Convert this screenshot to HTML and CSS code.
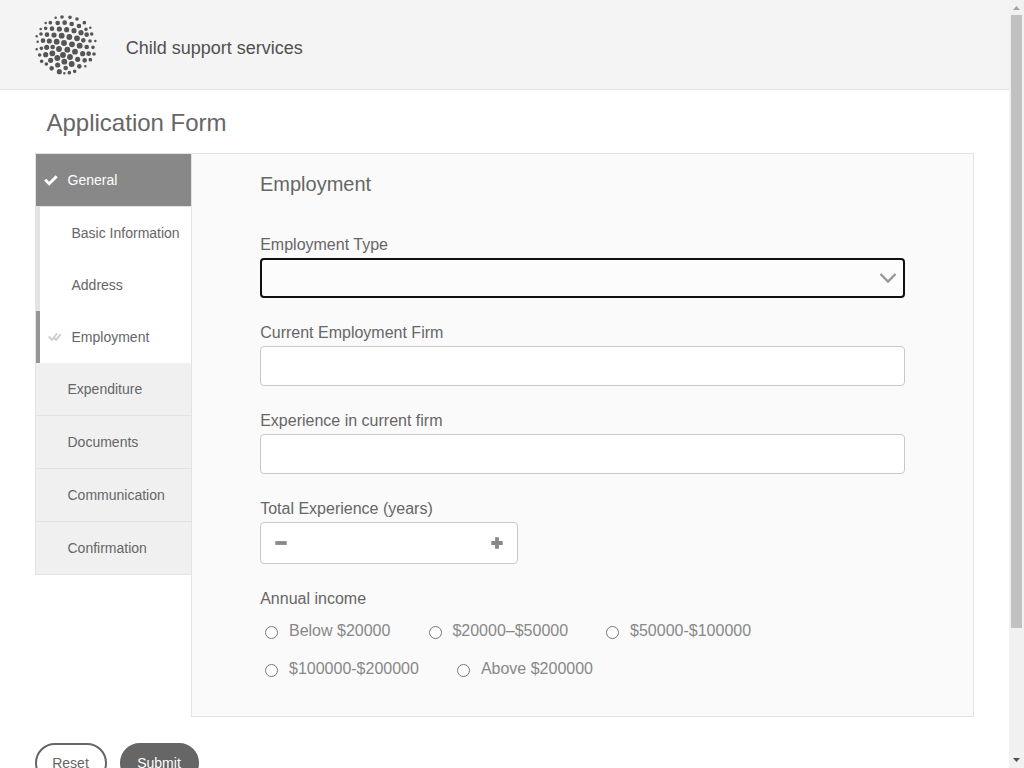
FILE: index.html
```html
<!DOCTYPE html>
<html lang="en">
<head>
<meta charset="utf-8">
<title>Child support services</title>
<link rel="stylesheet" href="styles.css">
</head>
<body>
<div class="viewport">
  <div class="page">
    <header class="header">
      <svg class="logo" viewBox="0 0 216 210" fill="none" stroke="#555" stroke-linecap="round">
        <path stroke-width="7.500" d="M77 23h.01M47 39h.01M32 57h.01M181 53h.01M20 79h.01M23 95h.01M196 93h.01M20 118h.01M103 190h.01M166 169h.01"/>
        <path stroke-width="11" d="M96 21h.01M120 22h.01M141 27h.01M163 38h.01M61 38h.01M47 55h.01M168 58h.01M33 72h.01M185 72h.01M180 93h.01M189 112h.01M34 115h.01M29 135h.01M192 132h.01M35 154h.01M49 162h.01M181 149h.01M118 188h.01M134 184h.01"/>
        <path stroke-width="14" d="M83 39h.01M104 38h.01M125 42h.01M147 48h.01M66 56h.01M51 74h.01M170 74h.01M39 92h.01M68 111h.01M160 91h.01M170 111h.01M176 131h.01M164 151h.01M148 169h.01M65 175h.01M107 174h.01"/>
        <path stroke-width="15.500" d="M88 57h.01M110 59h.01M132 62h.01M153 68h.01M72 75h.01M58 93h.01M50 112h.01M158 131h.01M47 134h.01M62 151h.01M83 165h.01M88 185h.01M143 148h.01"/>
        <path stroke-width="17.500" d="M95 77h.01M118 81h.01M141 85h.01M80 95h.01M102 99h.01M126 103h.01M149 107h.01M67 130h.01M87 117h.01M112 119h.01M135 125h.01M99 135h.01M120 141h.01M82 144h.01M103 155h.01M125 162h.01"/>
      </svg>
      <div class="brand">Child support services</div>
    </header>
    <h1 class="title">Application Form</h1>
    <main class="form">
      <nav class="nav">
        <div class="tab tab-active"><svg class="check" viewBox="0 0 14 12"><path d="M1.200 5.800l4 3.900 7.500-7.400" fill="none" stroke="#fff" stroke-width="3"/></svg>General</div>
        <div class="steps">
          <div class="step">Basic Information</div>
          <div class="step">Address</div>
          <div class="step step-current"><svg class="double-check" viewBox="0 0 14 10"><path d="M.8 4.500l3.300 3.300L9 1.500M6.200 6.300L8 7.800 12.700 2.300" fill="none" stroke="#ccc" stroke-width="1.900"/></svg>Employment</div>
        </div>
        <div class="tab">Expenditure</div>
        <div class="tab">Documents</div>
        <div class="tab">Communication</div>
        <div class="tab">Confirmation</div>
      </nav>
      <section class="panel">
        <h2 class="heading">Employment</h2>
        <label class="label">Employment Type</label>
        <div class="field select"><svg width="18" height="12" viewBox="0 0 18 12"><path d="M1.500 2l7.500 7.500L16.500 2" fill="none" stroke="#969696" stroke-width="2.300"/></svg></div>
        <label class="label">Current Employment Firm</label>
        <div class="field"></div>
        <label class="label">Experience in current firm</label>
        <div class="field"></div>
        <label class="label">Total Experience (years)</label>
        <div class="field stepper">
          <svg width="12" height="12"><path d="M0.300 6h11.400" stroke="#888" stroke-width="3.800"/></svg>
          <svg width="12" height="12"><path d="M0.300 6h11.400M6 .3v11.400" stroke="#888" stroke-width="3.800"/></svg>
        </div>
        <div class="label">Annual income</div>
        <div class="radios">
          <label class="radio"><input type="radio" name="income">Below $20000</label>
          <label class="radio"><input type="radio" name="income">$20000–$50000</label>
          <label class="radio"><input type="radio" name="income">$50000-$100000</label>
          <label class="radio"><input type="radio" name="income">$100000-$200000</label>
          <label class="radio"><input type="radio" name="income">Above $200000</label>
        </div>
      </section>
    </main>
    <div class="actions">
      <button class="button">Reset</button>
      <button class="button button-primary">Submit</button>
    </div>
  </div>
  <div class="scrollbar">
    <svg class="arrow" viewBox="0 0 15 15"><path d="M4 10L7.500 6 11 10z" fill="#a3a3a3"/></svg>
    <div class="thumb"></div>
    <svg class="arrow arrow-down" viewBox="0 0 15 15"><path d="M4 5L7.500 9 11 5z" fill="#505050"/></svg>
  </div>
</div>
</body>
</html>
```
FILE: styles.css
```css
* { box-sizing: border-box; }
body {
  margin: 0;
  overflow: hidden;
  background: #fff;
  color: #666;
  font: 16px/20px "Liberation Sans", Arial, sans-serif;
}
.viewport { display: flex; height: 768px; overflow: hidden; }
.page { width: 1009px; }
.header {
  display: flex;
  height: 90px;
  padding: 10px 0 0 30px;
  background: #f4f4f4;
  border-bottom: 1px solid #e3e3e3;
}
.logo { width: 72px; height: 70px; }
.brand { padding: 26px 0 0 23.700px; font-size: 18px; line-height: 24px; color: #505050; }
.title { margin: 17px 0 14px 46.500px; font-size: 24px; line-height: 32px; font-weight: 400; }
.form { display: flex; align-items: flex-start; margin-left: 35px; width: 939px; }
.nav {
  width: 156px;
  border: 1px solid #e3e3e3;
  border-width: 1px 0 0 1px;
  font-size: 14px;
}
.tab {
  display: flex;
  align-items: center;
  height: 53px;
  padding-left: 31.500px;
  background: #f0f0f0;
  border-bottom: 1px solid #e3e3e3;
}
.tab-active { padding-left: 7.500px; background: #888; color: #fff; }
.check { width: 14px; height: 12px; margin-right: 10px; }
.steps { background: #fff; }
.step {
  display: flex;
  align-items: center;
  height: 52px;
  padding-left: 31.500px;
  border-left: 4px solid #e3e3e3;
  white-space: nowrap;
}
.step-current { padding-left: 8px; border-left-color: #969696; }
.double-check { width: 14px; height: 10px; margin-right: 9.500px; }
.panel {
  width: 783px;
  height: 564px;
  padding: 16px 68px 0;
  background: #fafafa;
  border: 1px solid #e3e3e3;
}
.heading { margin: 0 0 33px; font-size: 20px; line-height: 28px; font-weight: 400; }
.label { display: block; margin-left: .2px; height: 27px; line-height: 28px; }
.field {
  height: 40px;
  margin-bottom: 21px;
  background: #fff;
  border: 1px solid #c8c8c8;
  border-radius: 4px;
}
.select {
  display: flex;
  align-items: center;
  justify-content: flex-end;
  padding-right: 6px;
  background: #fcfcfc;
  border: 2px solid #101010;
}
.stepper {
  display: flex;
  align-items: center;
  justify-content: space-between;
  width: 258px;
  height: 42px;
  padding: 0 14px;
}
.radios { display: flex; flex-wrap: wrap; column-gap: 33px; color: #888; }
.radio { display: flex; height: 38px; line-height: 38px; }
.radio input { margin: 14px 10.800px 0 5.200px; width: 13px; height: 13px; }
.actions { display: flex; gap: 13px; margin: 26px 0 0 35px; }
.button {
  height: 40px;
  width: 72px;
  padding: 0 1px 0 0;
  border: 2px solid #666;
  border-radius: 20px;
  background: #fff;
  color: #666;
  font: 14px/20px "Liberation Sans", Arial, sans-serif;
}
.button-primary { width: 79px; background: #666; color: #fff; }
.scrollbar { display: flex; flex-direction: column; width: 15px; background: #f1f1f1; }
.arrow { width: 15px; height: 15px; }
.thumb { width: 11px; height: 613px; margin-left: 2px; background: #c1c1c1; }
.arrow-down { margin-top: auto; }
```
